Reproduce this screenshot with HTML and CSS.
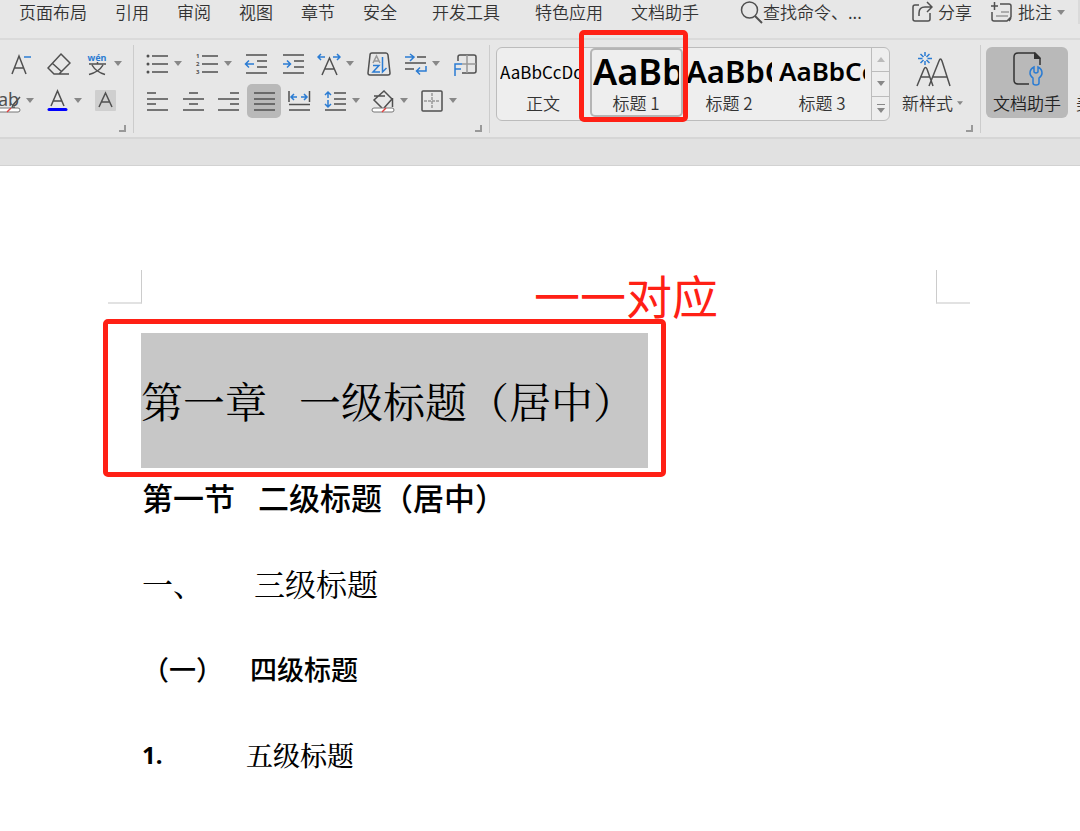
FILE: index.html
```
<!DOCTYPE html>
<html lang="zh-CN">
<head>
    <meta charset="UTF-8">
    <meta name="viewport" content="width=device-width, initial-scale=1.0">
    <title>文档标题样式</title>
    <link rel="stylesheet" href="styles.css">
</head>
<body>
    <header class="menubar">
        <nav class="tabs">
            <a href="#">页面布局</a>
            <a href="#">引用</a>
            <a href="#">审阅</a>
            <a href="#">视图</a>
            <a href="#">章节</a>
            <a href="#">安全</a>
            <a href="#" class="wide">开发工具</a>
            <a href="#" class="wide">特色应用</a>
            <a href="#">文档助手</a>
        </nav>
        <button class="search">
            <svg width="23" height="24" viewBox="0 0 23 24"><circle cx="9.500" cy="10" r="8"/><path d="M15 16l7 7" stroke-width="2"/></svg>
            查找命令、...
        </button>
        <div class="menu-right">
            <button>
                <svg width="22" height="22" viewBox="0 0 22 22"><path d="M8 4H4Q2 4 2 6v12q0 2 2 2h13q2 0 2-2v-6M8 15V12q0-6 6-6h6M16 1l5 5-5 5"/></svg>
                分享
            </button>
            <button>
                <svg width="23" height="22" viewBox="0 0 23 22"><path d="M10 3h9q2 0 2 2v11l-4 4H4q-2 0-2-2v-7M1 5h7M4.500 1v8M19 20l2-3"/><path class="soft" d="M11 11h8M6 15h12"/></svg>
                批注
                <svg class="caret" width="8" height="5" viewBox="0 0 8 5"><path d="M0 0h8L4 5z"/></svg>
            </button>
        </div>
    </header>

    <div class="ribbon">
        <!-- 字体 -->
        <section class="group font-group">
            <div class="row row-indent">
                <button aria-label="缩小字号"><svg width="24" height="24" viewBox="0 0 24 24"><path d="M3 22L10 4l7 18M5.500 16h9"/><path class="blue" d="M15 5h7"/></svg></button>
                <button aria-label="清除格式"><svg width="24" height="24" viewBox="0 0 24 24"><path d="M14 2l9 9-11 11H7l-6-6zM5 11l10 9M7 22h15"/></svg></button>
                <button aria-label="拼音指南"><svg width="24" height="24" viewBox="0 0 24 24"><text class="pinyin" x="12" y="9" text-anchor="middle">wén</text><path d="M4 12h17M7 13q4 7 13 9.500M18 13q-4 7-14 9.500M12.500 10v2"/></svg><svg class="caret" width="8" height="5" viewBox="0 0 8 5"><path d="M0 0h8L4 5z"/></svg></button>
            </div>
            <div class="row">
                <button aria-label="突出显示"><svg width="21" height="24" viewBox="0 0 21 24"><text class="ab" x="-2" y="17">ab</text><path d="M20 8l-7 8-1 3 3-1" /><rect class="paper" x="-4" y="19" width="24" height="4" rx="2"/><path class="red" d="M7 23l4-4"/></svg><svg class="caret" width="8" height="5" viewBox="0 0 8 5"><path d="M0 0h8L4 5z"/></svg></button>
                <button aria-label="字体颜色"><svg width="24" height="24" viewBox="0 0 24 24"><path d="M6 17L12.500 2 19 17M8 12h9"/><path class="ink" d="M4 20.500h17"/></svg><svg class="caret" width="8" height="5" viewBox="0 0 8 5"><path d="M0 0h8L4 5z"/></svg></button>
                <button aria-label="字符底纹"><svg width="24" height="24" viewBox="0 0 24 24"><rect class="shade" x="2" y="1" width="21" height="21" rx="1"/><path d="M6 18l6.500-14L19 18M8 13h9"/></svg></button>
            </div>
            <button class="launcher" aria-label="字体设置"></button>
        </section>

        <!-- 段落 -->
        <section class="group para-group">
            <div class="row">
                <button aria-label="项目符号"><svg width="24" height="24" viewBox="0 0 24 24"><path d="M7 4h16M7 12h16M7 20h16"/><circle class="dot" cx="3" cy="4" r="1.500"/><circle class="dot" cx="3" cy="12" r="1.500"/><circle class="dot" cx="3" cy="20" r="1.500"/></svg><svg class="caret" width="8" height="5" viewBox="0 0 8 5"><path d="M0 0h8L4 5z"/></svg></button>
                <button aria-label="编号"><svg width="24" height="24" viewBox="0 0 24 24"><path d="M7 4h16M7 12h16M7 20h16"/><text class="num" x="1" y="6">1</text><text class="num" x="1" y="14">2</text><text class="num" x="1" y="22">3</text></svg><svg class="caret" width="8" height="5" viewBox="0 0 8 5"><path d="M0 0h8L4 5z"/></svg></button>
                <button aria-label="减少缩进"><svg width="24" height="24" viewBox="0 0 24 24"><path d="M2 3h21M13 9h10M13 15h10M2 21h21"/><path class="blue" d="M10 12H2M5 8.500L1.500 12 5 15.500"/></svg></button>
                <button aria-label="增加缩进"><svg width="24" height="24" viewBox="0 0 24 24"><path d="M2 3h21M13 9h10M13 15h10M2 21h21"/><path class="blue" d="M2 12h8M6 8.500L9.500 12 6 15.500"/></svg></button>
                <button aria-label="中文版式"><svg width="24" height="24" viewBox="0 0 24 24"><path d="M5 23l7.500-17L20 23M8 17h9"/><path class="blue" d="M8 5H1M4 2L1 5l3 3M16 5h7M20 2l3 3-3 3"/></svg><svg class="caret" width="8" height="5" viewBox="0 0 8 5"><path d="M0 0h8L4 5z"/></svg></button>
                <button aria-label="排序"><svg width="24" height="24" viewBox="0 0 24 24"><path d="M5 1h14q1.500 0 2 2l2 18q0 2-2 2H3q-2 0-2-2L3 3q0-2 2-2z"/><path class="soft" d="M6 11l3.500-7 3.500 7M7 9h5"/><path class="blue" d="M6 13.500h6L6 20h7M15.500 5v15l4-4"/></svg></button>
                <button aria-label="换行"><svg width="24" height="24" viewBox="0 0 24 24"><path d="M14 5h9M2 11h21M2 17h9"/><path class="blue" d="M2 5h9M7 2l4 3-4 4M23 14v5h-9M17 15.500L13.500 19l3.500 3.500"/></svg><svg class="caret" width="8" height="5" viewBox="0 0 8 5"><path d="M0 0h8L4 5z"/></svg></button>
                <button aria-label="制表位"><svg width="24" height="24" viewBox="0 0 24 24"><path d="M5 9V5q0-2 2-2h14q2 0 2 2v14q0 2-2 2H9"/><path class="soft" d="M14 3v18M9 12h14"/><path class="blue" d="M2 24V12h7M2 17h6"/></svg></button>
            </div>
            <div class="row row-short">
                <button aria-label="左对齐"><svg width="24" height="24" viewBox="0 0 24 24"><path d="M2 4h9M2 10h21M2 15h9M2 21h21"/></svg></button>
                <button aria-label="居中"><svg width="24" height="24" viewBox="0 0 24 24"><path d="M8 4h9M2 10h21M8 15h9M2 21h21"/></svg></button>
                <button aria-label="右对齐"><svg width="24" height="24" viewBox="0 0 24 24"><path d="M14 4h9M2 10h21M14 15h9M2 21h21"/></svg></button>
                <button class="pressed" aria-label="两端对齐"><svg width="24" height="24" viewBox="0 0 24 24"><path d="M2 4h21M2 10h21M2 15h21M2 21h21"/></svg></button>
                <button aria-label="分散对齐"><svg width="24" height="24" viewBox="0 0 24 24"><path d="M2 2v11M22.500 2v11M2 15.500h21M2 21h21"/><path class="blue" d="M10 8H4M7 5L4 8l3 3M14 8h6M17 5l3 3-3 3"/></svg></button>
                <button aria-label="行距"><svg width="24" height="24" viewBox="0 0 24 24"><path d="M11 4h12M11 10h12M11 15h12M2 21h21"/><path class="blue" d="M5 9V3M2 6l3-3 3 3M5 11v7M2 15l3 3 3-3"/></svg><svg class="caret" width="8" height="5" viewBox="0 0 8 5"><path d="M0 0h8L4 5z"/></svg></button>
                <button aria-label="底纹颜色"><svg width="24" height="24" viewBox="0 0 24 24"><path d="M11 19l-8-8L13 2l8 8-8 9M3 7h11M21.500 9v9"/><rect class="paper" x="1" y="19" width="22" height="4" rx="2"/><path class="red" d="M11 23l4-4"/></svg><svg class="caret" width="8" height="5" viewBox="0 0 8 5"><path d="M0 0h8L4 5z"/></svg></button>
                <button aria-label="边框"><svg width="24" height="24" viewBox="0 0 24 24"><rect x="2" y="2" width="20" height="20" rx="1"/><path class="soft" stroke-dasharray="3 1" d="M12 4v16M4 12h16"/></svg><svg class="caret" width="8" height="5" viewBox="0 0 8 5"><path d="M0 0h8L4 5z"/></svg></button>
            </div>
            <button class="launcher" aria-label="段落设置"></button>
        </section>

        <!-- 样式 -->
        <section class="group style-group">
            <div class="gallery">
                <button class="style">
                    <span class="preview preview-body">AaBbCcDd</span>
                    <span class="style-name">正文</span>
                </button>
                <button class="style selected">
                    <span class="preview preview-h1">AaBb</span>
                    <span class="style-name">标题 1</span>
                </button>
                <button class="style">
                    <span class="preview preview-h2">AaBbC</span>
                    <span class="style-name">标题 2</span>
                </button>
                <button class="style">
                    <span class="preview preview-h3">AaBbCc</span>
                    <span class="style-name">标题 3</span>
                </button>
                <div class="scroller">
                    <button class="off" aria-label="上一行"><svg class="caret" width="8" height="5" viewBox="0 0 8 5"><path d="M0 5h8L4 0z"/></svg></button>
                    <button aria-label="下一行"><svg class="caret" width="8" height="5" viewBox="0 0 8 5"><path d="M0 0h8L4 5z"/></svg></button>
                    <button aria-label="更多样式"><svg class="caret" width="8" height="9" viewBox="0 0 8 9"><path d="M0 0h8v1H0zM0 4h8L4 9z"/></svg></button>
                </div>
            </div>
            <div class="new-style">
                <button class="big">
                    <svg width="36" height="36" viewBox="0 0 36 36"><path d="M2 35L9 18q1.500-3 3 0l6 17M5 26h10M14 35L24 10q1.500-4 3 0l8 25M18 26h14"/><path class="blue" d="M10 1v4M10 10v4M3 7.500h4.500M12.500 7.500H17M5.500 3L8.500 6M11.500 9L14.500 12M14.500 3l-3 3M8.500 9L5.500 12"/></svg>
                    <span>新样式<svg class="caret" width="6" height="4" viewBox="0 0 8 5"><path d="M0 0h8L4 5z"/></svg></span>
                </button>
                <button class="launcher" aria-label="样式设置"></button>
            </div>
        </section>

        <!-- 文档助手 -->
        <section class="group tool-group">
            <button class="big helper">
                <svg width="36" height="36" viewBox="0 0 36 36"><path class="dark" d="M20 33H9q-4 0-4-4V6q0-4 4-4h17l5 5v7"/><path class="fill" d="M25 1v7h7z"/><path class="blue" d="M25 16q-4 2-4 6 0 3 3 5v5q0 2 3 2t3-2v-5q3-2 3-5 0-4-4-6v5q-2 2-4 0z"/></svg>
                <span>文档助手</span>
            </button>
            <button class="big next"><span>美化</span></button>
        </section>
    </div>

    <div class="ruler-gap"></div>

    <main class="page">
        <div class="crop-marks">
            <div class="crop crop-left"></div>
            <div class="crop crop-right"></div>
        </div>
        <div class="headings">
            <div class="marked">
                <h1><span>第一章</span><span>一级标题（居中）</span></h1>
                <p class="note">一一对应</p>
            </div>
            <h2><span>第一节</span><span>二级标题（居中）</span></h2>
            <h3><span class="label">一、</span>三级标题</h3>
            <h4><span class="label">（一）</span>四级标题</h4>
            <h5><span class="label">1.</span>五级标题</h5>
        </div>
    </main>
</body>
</html>
```
FILE: styles.css
```
* {
    box-sizing: border-box;
}
body {
    margin: 0;
    background: #fff;
    color: #000;
    font-family: "Noto Sans", "Noto Sans CJK SC", sans-serif;
    overflow-x: hidden;
}
button {
    display: flex;
    align-items: center;
    flex-shrink: 0;
    padding: 0;
    border: none;
    background: none;
    color: #333;
    font: inherit;
    white-space: nowrap;
    cursor: pointer;
}
svg {
    display: block;
    flex-shrink: 0;
    fill: none;
    stroke: #505050;
    stroke-width: 1.5;
}
.blue {
    stroke: #2b7cd3;
}
.red {
    stroke: #e04040;
}
.soft {
    stroke: #999;
}
.dark {
    stroke: #333;
}
.paper {
    fill: #fff;
    stroke: #777;
    stroke-width: 1;
}
.ink {
    stroke: #00f;
    stroke-width: 3;
    stroke-linecap: round;
}
.shade {
    fill: #cfcfcf;
    stroke: none;
}
.dot, .fill {
    fill: #505050;
    stroke: none;
}
.fill {
    fill: #333;
}
.caret {
    fill: #888;
    stroke: none;
}
.pinyin {
    fill: #2b7cd3;
    stroke: none;
    font-size: 9px;
    font-weight: bold;
}
.ab {
    fill: #505050;
    stroke: none;
    font-size: 18px;
}
.num {
    fill: #505050;
    stroke: none;
    font-size: 6px;
    font-weight: bold;
}

/* menu */
.menubar {
    display: flex;
    align-items: flex-start;
    height: 40px;
    padding-left: 19px;
    background: #e7e7e7;
    border-bottom: 2px solid #dadada;
    font-family: "Noto Sans CJK SC", sans-serif;
    font-size: 17px;
    font-weight: 350;
    line-height: 24px;
    white-space: nowrap;
}
.tabs {
    display: flex;
    gap: 28px;
}
.tabs a {
    color: #333;
    text-decoration: none;
}
.tabs .wide {
    margin-left: 7px;
}
.search {
    margin-left: 41px;
}
.menu-right {
    display: flex;
    gap: 18px;
    margin-left: auto;
    padding-right: 13px;
    border-right: 2px solid #dadada;
}
.menu-right button {
    gap: 5px;
}

/* ribbon */
.ribbon {
    display: flex;
    height: 99px;
    padding: 5px 0 4px;
    background: #e7e7e7;
    border-bottom: 2px solid #d6d6d6;
}
.group {
    flex-shrink: 0;
    border-right: 1px solid #ccc;
}
.row {
    display: flex;
    align-items: center;
    gap: 11px;
    height: 37px;
}
.row button {
    gap: 5px;
}
.row-indent {
    gap: 14px;
    padding-left: 9px;
}
.font-group {
    width: 134px;
}
.para-group {
    width: 356px;
    padding-left: 11px;
}
.para-group .row {
    justify-content: space-between;
    gap: 0;
    padding-right: 12px;
}
.para-group .row-short {
    padding-right: 32px;
}
.row .pressed {
    justify-content: center;
    width: 34px;
    height: 34px;
    margin: 0 -5px;
    background: #b9b9b9;
    border-radius: 5px;
}
.launcher {
    width: 7px;
    height: 7px;
    margin: 6px 7px 0 auto;
    border-right: 2px solid #999;
    border-bottom: 2px solid #999;
}
.style-group {
    display: flex;
    width: 491px;
    padding-left: 6px;
}
.gallery {
    display: flex;
    width: 394px;
    height: 74px;
    margin-top: 2px;
    background: #eee;
    border: 1px solid #bcbcbc;
    border-radius: 6px;
}
.style {
    position: relative;
    flex-direction: column;
    width: 93px;
    height: 69px;
    padding: 0 4px 0 3px;
}
.preview {
    width: 100%;
    height: 45px;
    overflow: hidden;
    color: #000;
    line-height: 47px;
    text-align: left;
}
.preview-body {
    width: 80px;
    margin-right: 6px;
    font-family: "Noto Sans CJK SC", sans-serif;
    font-size: 17px;
}
.preview-h1 {
    font-size: 36px;
    font-weight: 600;
}
.preview-h2 {
    font-size: 31px;
    font-weight: 600;
}
.preview-h3 {
    font-size: 26px;
    font-weight: 600;
}
.style-name {
    font-family: "Noto Sans CJK SC", sans-serif;
    font-size: 17px;
    font-weight: 350;
    line-height: 20px;
}
.selected {
    box-shadow: inset 0 0 0 2px #b5b5b5;
    border-radius: 5px;
}
/* red frame over the chosen style */
.selected::after {
    content: "";
    position: absolute;
    inset: -18px -5px -5px -11px;
    z-index: 1;
    border: 5px solid #ff2015;
    border-radius: 5px;
}
.scroller {
    display: flex;
    flex-direction: column;
    width: 18px;
    margin-left: auto;
    border-left: 1px solid #bcbcbc;
}
.scroller button {
    flex: 1;
    justify-content: center;
}
.scroller button + button {
    border-top: 1px solid #bcbcbc;
}
.off {
    opacity: 0.5;
}
.new-style {
    flex: 1;
}
.big {
    flex-direction: column;
    gap: 4px;
    height: 71px;
    margin-top: 2px;
    padding-top: 4px;
    font-family: "Noto Sans CJK SC", sans-serif;
    font-size: 17px;
    font-weight: 350;
    line-height: 24px;
}
.big span {
    display: flex;
    align-items: center;
    gap: 4px;
}
.new-style .big {
    margin-left: 12px;
}
.new-style .launcher {
    margin-top: 7px;
}
.tool-group {
    display: flex;
    gap: 8px;
    padding-left: 5px;
    border-right: none;
}
.helper {
    width: 82px;
    background: #b9b9b9;
    border-radius: 6px;
    color: #222;
}
.next {
    justify-content: flex-end;
    padding-bottom: 3px;
}
.ruler-gap {
    height: 27px;
    background: #e1e1e1;
    border-bottom: 1px solid #d2d2d2;
}

/* document */
.page {
    padding: 104px 0 50px 108px;
}
.crop-marks {
    display: flex;
    justify-content: space-between;
    padding-right: 110px;
}
.crop {
    width: 34px;
    height: 34px;
    border-bottom: 2px solid #e2e2e2;
}
.crop-left {
    border-right: 1px solid #ccc;
}
.crop-right {
    border-left: 1px solid #ccc;
}
.headings {
    padding-left: 34px;
    font-family: "Noto Serif CJK SC", "Noto Sans CJK SC", serif;
}
.headings h2,
.headings h3,
.headings h4,
.headings h5 {
    display: flex;
    margin: 0 0 46px;
    line-height: 40px;
}
.marked {
    position: relative;
    width: 563px;
    margin: 15px 0 0 -39px;
    padding: 9px 13px 4px 33px;
    border: 5px solid #ff2015;
    border-radius: 5px;
}
.marked h1 {
    display: flex;
    gap: 32px;
    margin: 0;
    background: #c7c7c7;
    font-size: 42px;
    font-weight: 400;
    line-height: 135px;
}
.note {
    position: absolute;
    top: -58px;
    right: -57px;
    margin: 0;
    color: #ff2015;
    font-family: "Noto Sans CJK SC", sans-serif;
    font-size: 46px;
    line-height: 56px;
}
.headings h2 {
    gap: 23px;
    font-size: 31px;
    font-family: "Noto Sans CJK SC", sans-serif;
    font-weight: 500;
}
.headings h3 {
    font-size: 31px;
    font-weight: 400;
}
.headings h4 {
    font-size: 27px;
    font-family: "Noto Sans CJK SC", sans-serif;
    font-weight: 500;
}
.headings h5 {
    font-size: 27px;
    font-weight: 500;
}
.label {
    width: 112px;
}
h4 .label {
    width: 108px;
}
h5 .label {
    width: 104px;
    font-family: "Noto Sans", sans-serif;
    font-size: 24px;
    font-weight: 700;
}
```
